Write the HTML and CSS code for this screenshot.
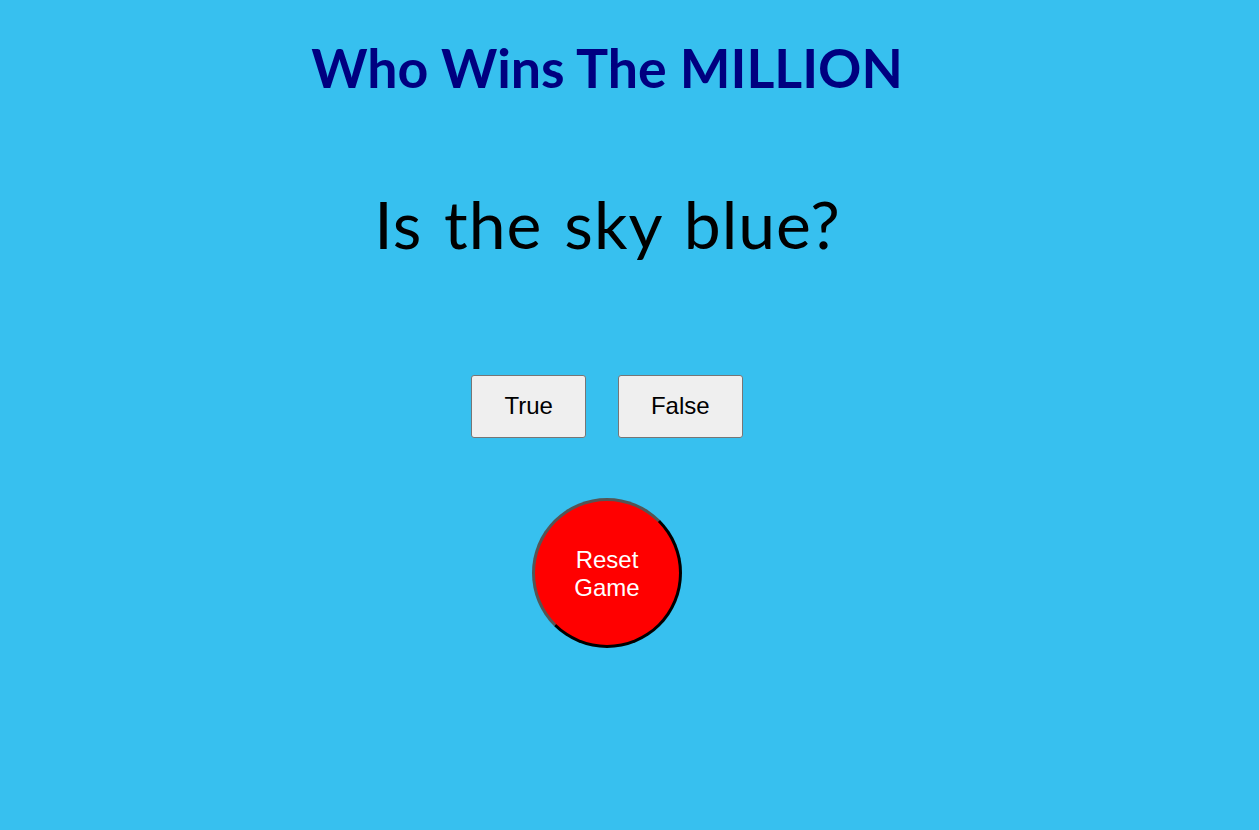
FILE: index.html
```html
<!DOCTYPE html>
<html>
<head>
<meta charset="utf-8">
<title>Who Wins The MILLION</title>
<link rel="stylesheet" href="styles.css">
</head>
<body>
<div class="game">
  <h1 class="title">Who Wins The MILLION</h1>
  <p class="question">Is the sky blue?</p>
  <div class="answers">
    <button class="answer">True</button>
    <button class="answer">False</button>
  </div>
  <button class="reset">Reset<br>Game</button>
</div>
</body>
</html>
```

FILE: styles.css
```css
html, body {
  background: #37c0ef;
}
body {
  margin: 8px;
  height: 814px;
}
.game {
  width: 1198px;
  display: flex;
  flex-direction: column;
  align-items: center;
}
.title {
  margin: 26.5px 0 0;
  font-family: Lato, "Open Sans", sans-serif;
  font-weight: 700;
  font-size: 53.7px;
  line-height: 1.2;
  color: #000080;
}
.question {
  margin: 85.5px 0 0;
  padding-left: 1px;
  font-family: Lato, "Open Sans", sans-serif;
  font-weight: 400;
  font-size: 66px;
  line-height: 1.2;
  letter-spacing: 1px;
  word-spacing: 4px;
  color: #000;
}
.answers {
  margin-top: 111px;
  display: flex;
  gap: 32px;
}
.answer {
  box-sizing: border-box;
  height: 63px;
  padding: 0 32px;
  font-family: "Liberation Sans", Arial, sans-serif;
  font-size: 24px;
  color: #000;
  background: #efefef;
  border: 1px solid #767676;
  border-radius: 3px;
}
.reset {
  margin-top: 60px;
  box-sizing: border-box;
  width: 150px;
  height: 150px;
  padding: 2px 0 0;
  border-radius: 50%;
  border: 3px solid;
  border-color: #555 #000 #000 #555;
  background: #ff0000;
  color: #fff;
  font-family: "Liberation Sans", Arial, sans-serif;
  font-size: 24px;
  line-height: 28px;
}
```
